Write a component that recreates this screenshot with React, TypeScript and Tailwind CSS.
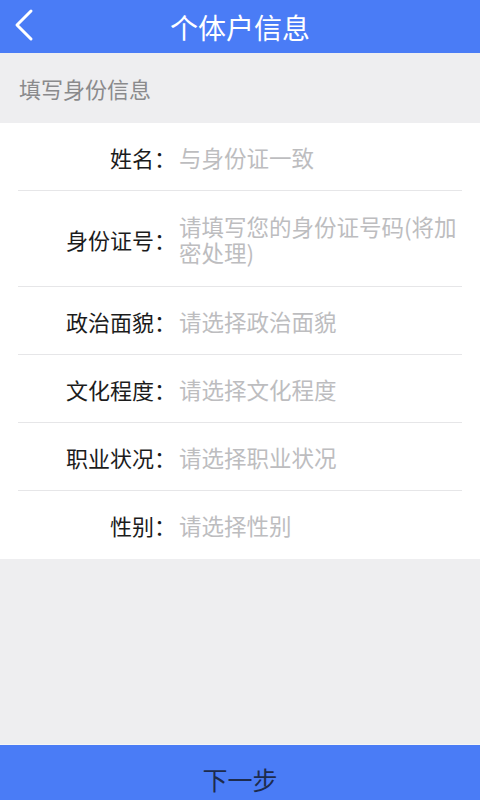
import React from 'react';

const rows = [
    { label: '姓名', hint: '与身份证一致' },
    { label: '身份证号', hint: '请填写您的身份证号码(将加密处理)' },
    { label: '政治面貌', hint: '请选择政治面貌' },
    { label: '文化程度', hint: '请选择文化程度' },
    { label: '职业状况', hint: '请选择职业状况' },
    { label: '性别', hint: '请选择性别' },
];

const font = { fontFamily: '"Noto Sans CJK SC", "Noto Sans", sans-serif' };

export default function App() {
    return (
        <div className="w-[480px] h-[800px] bg-[#eeeef0] flex flex-col" style={font}>
            <div className="h-[53px] bg-[#4a7cf6] flex items-center justify-center relative shrink-0">
                <svg className="absolute left-[13px] top-[8px]" width="22" height="34" viewBox="0 0 22 34">
                    <polyline points="18,3 4,17 18,31" fill="none" stroke="#fff" strokeWidth="3" strokeLinecap="round" strokeLinejoin="round" />
                </svg>
                <span className="text-white text-[28px] leading-none">个体户信息</span>
            </div>

            <div className="h-[70px] flex items-center pl-[19px] text-[22px] text-[#8a8a8c]">填写身份信息</div>

            <div className="bg-white">
                {rows.map((row, i) => (
                    <div key={row.label} className={`mx-[18px] flex items-center ${i === 1 ? 'h-[96px]' : 'h-[68px]'} ${i < rows.length - 1 ? 'border-b border-[#e6e6e8]' : ''}`}>
                        <div className="w-[158px] shrink-0 text-right text-[22px] text-[#1c1c1c] leading-none">{row.label}：</div>
                        <div className="flex-1 text-[22.5px] leading-[26px] text-[#bdbdbf] pl-[3px]">{row.hint}</div>
                    </div>
                ))}
            </div>

            <div className="flex-1" />

            <div className="h-[56px] bg-[#4a7cf6] border-t border-[#f5f5f5] flex items-center justify-center pt-[14px]">
                <span className="text-[25px] text-[#1d2b4d] leading-none">下一步</span>
            </div>
        </div>
    );
}
